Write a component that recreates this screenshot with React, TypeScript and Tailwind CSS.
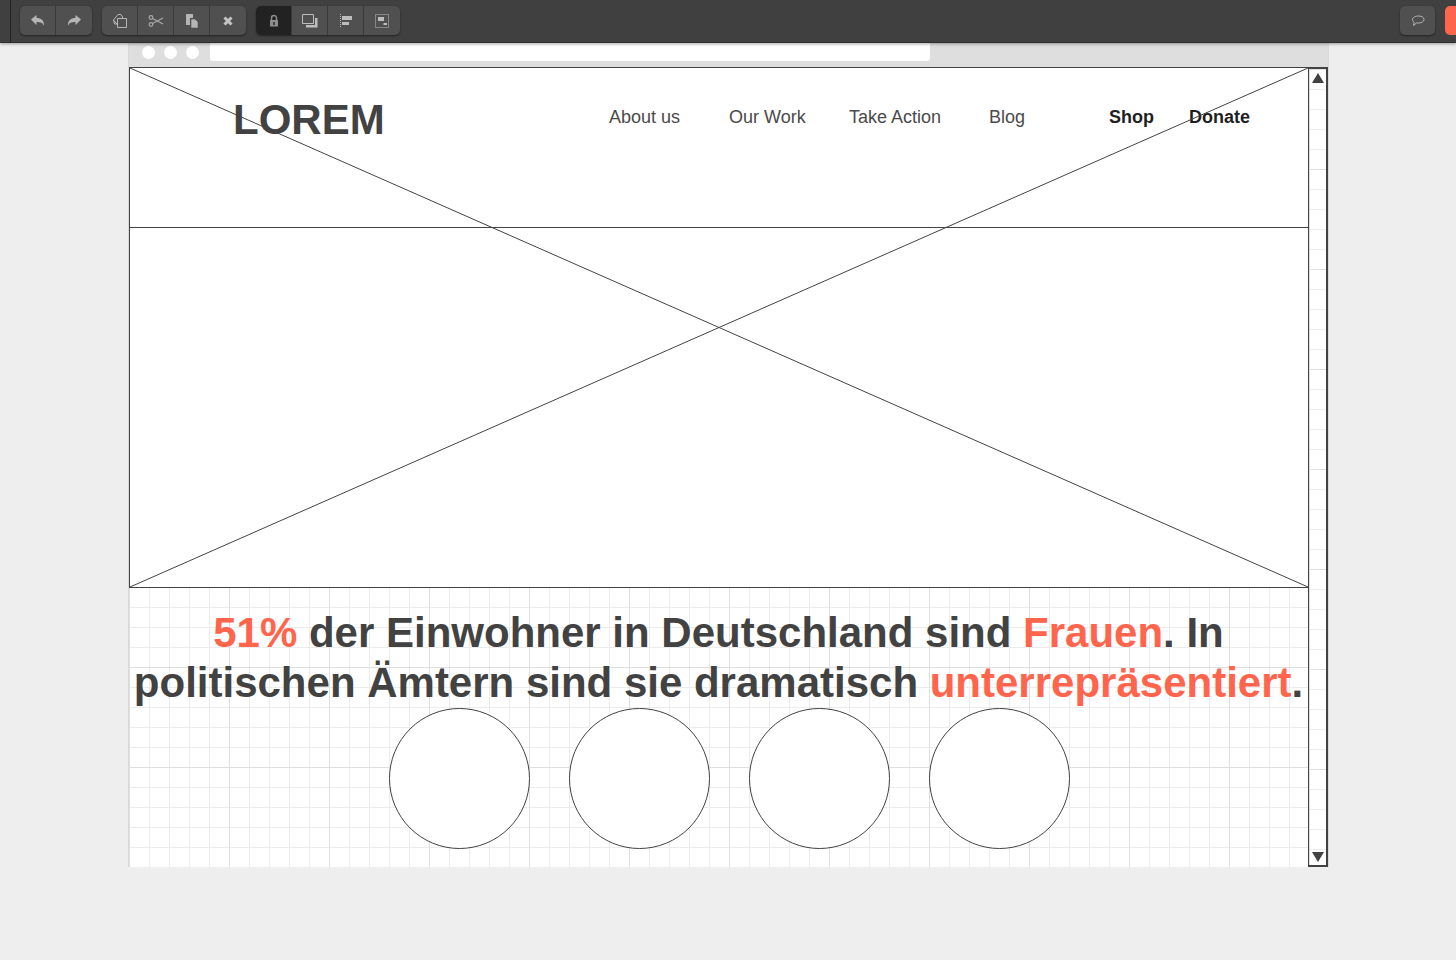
import React from "react";

const grid =
  "bg-white bg-[linear-gradient(to_right,#dfdfdf_1px,transparent_1px),linear-gradient(to_bottom,#dfdfdf_1px,transparent_1px),linear-gradient(to_right,#ececec_1px,transparent_1px),linear-gradient(to_bottom,#ececec_1px,transparent_1px)] bg-[size:100px_100px,100px_100px,20px_20px,20px_20px]";

const Ico = ({ children }: { children: React.ReactNode }) => (
  <svg width="16" height="16" viewBox="0 0 16 16" className="block">{children}</svg>
);

const Undo = () => <Ico><path d="M1 6.5 6.5 2v3C11 5 14.5 7.500 14 13c-1-3.200-3.500-4-7.500-4v3z" fill="#b5b5b5" /></Ico>;
const Redo = () => <Ico><path d="M15 6.500 9.500 2v3C5 5 1.500 7.500 2 13c1-3.200 3.500-4 7.500-4v3z" fill="#b5b5b5" /></Ico>;
const Copy = () => <Ico><g fill="none" stroke="#b5b5b5" strokeWidth="1"><path d="M6 1.500h3l1.500 2.500v1M5 11H2.500L1.500 7z" /><path d="M6 1.500 1.500 7" /><path d="M5.500 5.500h9v9h-9z" /></g></Ico>;
const Scissors = () => <Ico><g fill="none" stroke="#a8a8a8" strokeWidth="1.200"><circle cx="3" cy="4.500" r="1.800" /><circle cx="3" cy="11.500" r="1.800" /><path d="M4.500 5.500 15 11M4.500 10.500 15 5" /></g></Ico>;
const Paste = () => <Ico><path d="M2 1h7v4H6v7H2z" fill="#b5b5b5" /><path d="M7 6h4l3 3v6H7z" fill="#b5b5b5" stroke="#4f4f4f" strokeWidth=".6" /></Ico>;
const Cross = () => <Ico><path d="M4.500 4.500 11.500 11.500M11.500 4.500 4.500 11.500" stroke="#c4c4c4" strokeWidth="3" /></Ico>;
const Lock = () => <Ico><path d="M5.500 7V5a2.500 2.500 0 0 1 5 0v2" fill="none" stroke="#8c8c8c" strokeWidth="1.500" /><path d="M4 7h8v6.500H4z" fill="#8c8c8c" /><path d="M7.300 9h1.400v3H7.300z" fill="#222" /></Ico>;
const Arrange = () => <Ico><path d="M.500 1.500h11v9H.500z" fill="none" stroke="#bdbdbd" /><path d="M13 5h2.500v9.500H4V12h9z" fill="#bdbdbd" /></Ico>;
const Align = () => <Ico><path d="M2.500 1v14" stroke="#bdbdbd" strokeDasharray="1 1" /><path d="M4 3h10v4H4zM4 9h7v3H4z" fill="#bdbdbd" /></Ico>;
const Group = () => <Ico><path d="M1.500 1.500h13v13h-13z" fill="none" stroke="#bdbdbd" strokeDasharray="1 1" /><path d="M4 4h6v4H4zM9.500 10h3.500v2H9.500z" fill="#bdbdbd" /></Ico>;
const Bubble = () => <Ico><path d="M8.500 3c3 0 5.500 1.300 5.500 3.500S11.500 10 8.500 10H6.500L3.500 12.500 4.200 9.300C3.200 8.600 2.500 7.700 2.500 6.500 2.500 4.300 5.500 3 8.500 3z" fill="none" stroke="#b5b5b5" strokeWidth="1" /></Ico>;

const ToolGroup = ({ items, active }: { items: React.ReactNode[]; active?: number }) => (
  <div className="flex h-[29px] rounded-[5px] bg-[#505050] shadow-[0_1px_2px_#222222]">
    {items.map((it, i) => (
      <div
        key={i}
        className={
          "flex w-[36px] items-center justify-center first:rounded-l-[5px] last:rounded-r-[5px] " +
          (i < items.length - 1 ? "border-r border-[#3a3a3a] " : "") +
          (active === i ? "bg-[#222222]" : "")
        }
      >
        {it}
      </div>
    ))}
  </div>
);

export default function App() {
  return (
    <div className="flex h-[960px] w-[1456px] flex-col overflow-hidden bg-[#eeeeee] font-['Liberation_Sans',Arial,sans-serif]">
      <header className="z-10 flex h-[43px] shrink-0 items-start border-b border-[#2f2f2f] bg-[#404040] pt-[6px] shadow-[0_1px_3px_rgba(0,0,0,0.35)]">
        <div className="-mt-[6px] ml-[10px] h-[43px] w-px bg-[#222222]" />
        <div className="ml-[9px] flex gap-[10px]">
          <ToolGroup items={[<Undo />, <Redo />]} />
          <ToolGroup items={[<Copy />, <Scissors />, <Paste />, <Cross />]} />
          <ToolGroup active={0} items={[<Lock />, <Arrange />, <Align />, <Group />]} />
        </div>
        <div className="ml-auto flex gap-[10px]">
          <div className="flex h-[29px] w-[35px] items-center justify-center rounded-[5px] bg-[#505050] shadow-[0_1px_2px_#222222]">
            <Bubble />
          </div>
          <div className="h-[29px] w-[11px] rounded-l-[5px] bg-[#ff654d]" />
        </div>
      </header>

      <main className="ml-[128px] flex h-[824px] w-[1201px] flex-col border-x border-[#d9d9d9]">
        <div className="flex h-[24px] shrink-0 items-start bg-[#dedede]">
          <div className="mt-[3px] ml-[13px] flex gap-[9px]">
            <span className="h-[13px] w-[13px] rounded-full bg-white" />
            <span className="h-[13px] w-[13px] rounded-full bg-white" />
            <span className="h-[13px] w-[13px] rounded-full bg-white" />
          </div>
          <div className="ml-[11px] h-[18px] w-[720px] rounded-b-[3px] bg-white" />
        </div>

        <div className="flex min-h-0 flex-1">
          <div className={"flex w-[1180px] flex-col bg-local " + grid}>
            <section className="relative h-[521px] shrink-0 border-y border-l border-[#424242] bg-white">
              <div className="h-[160px] border-b border-[#424242] pl-[103px]">
                <div className="flex items-start">
                  <h1 className="mt-[26px] w-[376px] text-[42px] leading-[52px] font-bold text-[#424242]">LOREM</h1>
                  <nav className="mt-[38px] flex text-[18px] leading-[22px] text-[#4a4a4a]">
                    <span className="w-[120px]">About us</span>
                    <span className="w-[120px]">Our Work</span>
                    <span className="w-[140px]">Take Action</span>
                    <span className="w-[120px]">Blog</span>
                    <span className="w-[80px] font-bold text-[#1f1f1f]">Shop</span>
                    <span className="font-bold text-[#1f1f1f]">Donate</span>
                  </nav>
                </div>
              </div>
              <svg className="absolute inset-0 h-full w-full" viewBox="0 0 1179 519" preserveAspectRatio="none">
                <path d="M0 0 1179 519M0 519 1179 0" stroke="#424242" strokeWidth="1" fill="none" />
              </svg>
            </section>

            <h2 className="mt-[20px] text-center text-[42px] leading-[50px] font-bold tracking-normal whitespace-nowrap text-[#424242]">
              <span className="text-[#ff644c]">51%</span> der Einwohner in Deutschland sind{" "}
              <span className="text-[#ff644c]">Frauen</span>. In
              <br />
              politischen Ämtern sind sie dramatisch <span className="text-[#ff644c]">unterrepräsentiert</span>.
            </h2>

            <div className="ml-[260px] flex gap-[40px]">
              {[0, 1, 2, 3].map((i) => (
                <div key={i} className="h-[141px] w-[141px] shrink-0 rounded-full border border-[#424242] bg-white mr-[-1px]" />
              ))}
            </div>
          </div>

          <aside className={"flex w-[20px] flex-col items-center justify-between border-2 border-l border-[#424242] bg-white px-0 pt-[4px] pb-[3px] " + grid}>
            <svg width="12" height="10" viewBox="0 0 12 10"><path d="M6 0 12 10H0z" fill="#424242" /></svg>
            <svg width="12" height="10" viewBox="0 0 12 10"><path d="M0 0H12L6 10z" fill="#424242" /></svg>
          </aside>
        </div>
      </main>
    </div>
  );
}
